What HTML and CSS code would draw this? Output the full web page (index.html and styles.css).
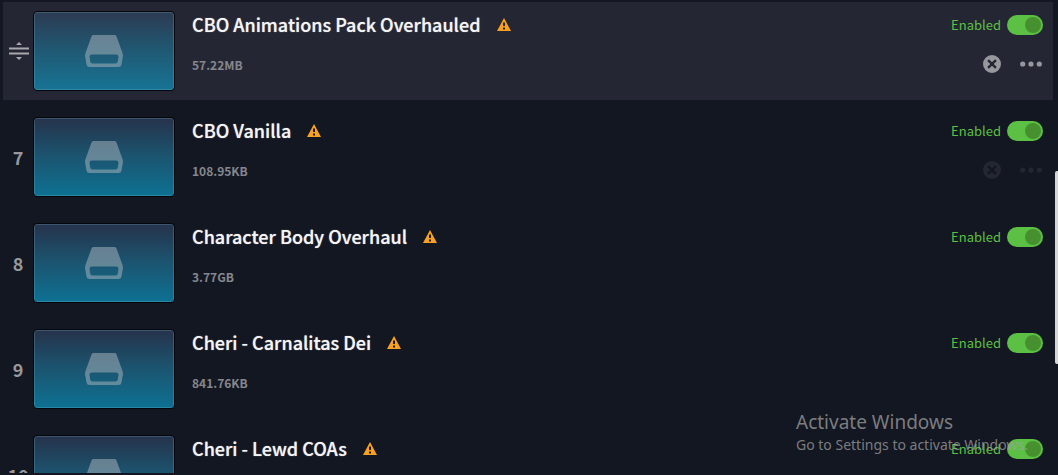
FILE: index.html
```
<!DOCTYPE html>
<html lang="en">
<head>
<meta charset="utf-8">
<title>Mods</title>
<link rel="stylesheet" href="styles.css">
</head>
<body>
<svg class="symbols" aria-hidden="true">
  <symbol id="drive" viewBox="0 0 38 32"><path fill-rule="evenodd" d="M8.500 0h21q1.400 0 2 1.400L37.500 18q.5 1.300.5 3l-1.500 8.500Q36 32 33.500 32h-29Q2 32 1.500 29.500L0 21q0-1.700.5-3L6.500 1.400Q7.100 0 8.500 0zM7 19.500q-2.500 0-2.500 2l.7 5Q5.500 28.500 7.500 28.500h23q2 0 2.300-2l.7-5q0-2-2.500-2z"/></symbol>
  <symbol id="warning" viewBox="0 0 14 13"><path fill-rule="evenodd" d="M7 0l7 13H0zM6 4.500v3.500h2V4.500zM6 9.500v2h2v-2z"/></symbol>
  <symbol id="remove" viewBox="0 0 18 18"><path fill-rule="evenodd" d="M9 0a9 9 0 1 1 0 18A9 9 0 0 1 9 0zM5.900 4.200L4.200 5.900 7.300 9l-3.100 3.100 1.700 1.700L9 10.700l3.100 3.100 1.700-1.700L10.700 9l3.100-3.100-1.700-1.700L9 7.300z"/></symbol>
  <symbol id="more" viewBox="0 0 23 6"><circle cx="2.700" cy="3" r="2.600"/><circle cx="11" cy="3" r="2.600"/><circle cx="19.300" cy="3" r="2.600"/></symbol>
</svg>

<main class="viewport">
  <ol class="mods">
    <li class="mod mod-active">
      <span class="order"><svg class="grip" viewBox="0 0 22 20" role="img" aria-label="Drag to reorder"><path d="M12 1l3 3H9zM2 6.500h20v2H2zM2 11.500h20v2H2zM9 16h6l-3 3z"/></svg></span>
      <div class="thumb"><svg class="drive"><use href="#drive"/></svg></div>
      <div class="info">
        <h2 class="title">CBO Animations Pack Overhauled <svg class="warning"><use href="#warning"/></svg></h2>
        <p class="size">57.22MB</p>
      </div>
      <div class="controls">
        <label class="toggle">Enabled <input class="switch" type="checkbox" role="switch" checked></label>
        <div class="actions">
          <button class="action" aria-label="Remove"><svg class="remove"><use href="#remove"/></svg></button>
          <button class="action" aria-label="More"><svg class="more"><use href="#more"/></svg></button>
        </div>
      </div>
    </li>
    <li class="mod">
      <span class="order">7</span>
      <div class="thumb"><svg class="drive"><use href="#drive"/></svg></div>
      <div class="info">
        <h2 class="title">CBO Vanilla <svg class="warning"><use href="#warning"/></svg></h2>
        <p class="size">108.95KB</p>
      </div>
      <div class="controls">
        <label class="toggle">Enabled <input class="switch" type="checkbox" role="switch" checked></label>
        <div class="actions actions-faded">
          <button class="action" aria-label="Remove"><svg class="remove"><use href="#remove"/></svg></button>
          <button class="action" aria-label="More"><svg class="more"><use href="#more"/></svg></button>
        </div>
      </div>
    </li>
    <li class="mod">
      <span class="order">8</span>
      <div class="thumb"><svg class="drive"><use href="#drive"/></svg></div>
      <div class="info">
        <h2 class="title">Character Body Overhaul <svg class="warning"><use href="#warning"/></svg></h2>
        <p class="size">3.77GB</p>
      </div>
      <div class="controls">
        <label class="toggle">Enabled <input class="switch" type="checkbox" role="switch" checked></label>
      </div>
    </li>
    <li class="mod">
      <span class="order">9</span>
      <div class="thumb"><svg class="drive"><use href="#drive"/></svg></div>
      <div class="info">
        <h2 class="title">Cheri - Carnalitas Dei <svg class="warning"><use href="#warning"/></svg></h2>
        <p class="size">841.76KB</p>
      </div>
      <div class="controls">
        <label class="toggle">Enabled <input class="switch" type="checkbox" role="switch" checked></label>
      </div>
    </li>
    <li class="mod">
      <span class="order">10</span>
      <div class="thumb"><svg class="drive"><use href="#drive"/></svg></div>
      <div class="info">
        <h2 class="title">Cheri - Lewd COAs <svg class="warning"><use href="#warning"/></svg></h2>
      </div>
      <div class="controls">
        <label class="toggle">Enabled <input class="switch" type="checkbox" role="switch" checked></label>
      </div>
    </li>
  </ol>
</main>
<div class="scroll-thumb"></div>
<aside class="watermark">
  <p class="watermark-title">Activate Windows</p>
  <p class="watermark-text">Go to Settings to activate Windows.</p>
</aside>
</body>
</html>
```
FILE: styles.css
```
* { box-sizing: border-box; }

body {
  margin: 0;
  height: 100vh;
  overflow: hidden;
  position: relative;
  background: #131722;
  color: #f4f4f5;
  font-family: "Noto Sans CJK SC", "Noto Sans", sans-serif;
}

h2, p, ol { margin: 0; padding: 0; }
svg { display: block; fill: currentColor; }
.symbols { position: absolute; width: 0; height: 0; }

.viewport {
  height: calc(100vh - 2px);
  overflow: hidden;
  padding: 2px 5px 0 3px;
}

.mods {
  list-style: none;
  display: flex;
  flex-direction: column;
  gap: 8px;
}

.mod {
  display: flex;
  align-items: flex-start;
  padding: 9px 10px 9px 0;
}
.mod-active { background: #242733; }

.order {
  width: 30px;
  flex: none;
  align-self: center;
  display: flex;
  justify-content: center;
  color: #97989d;
  font-size: 18px;
  line-height: 24px;
  font-weight: 700;
}
.grip { width: 22px; height: 20px; color: #a7a8ad; }

.thumb {
  width: 142px;
  height: 80px;
  flex: none;
  display: flex;
  align-items: center;
  justify-content: center;
  border: 1px solid #03060a;
  border-radius: 4px;
  background: linear-gradient(#26334b, #1b5570 50%, #0d7193);
  box-shadow: inset 0 0 0 1px rgba(130, 190, 210, 0.25);
  color: rgba(168, 180, 187, 0.52);
}
.mod-active .thumb { background: linear-gradient(#2c3b52, #205973 50%, #167495); }
.drive { width: 38px; height: 32px; }

.info { flex: 1; min-width: 0; padding-left: 17px; }

.title {
  display: flex;
  align-items: center;
  gap: 16px;
  font-size: 18px;
  line-height: 26px;
  font-weight: 500;
  text-shadow: 0 0 1px rgba(244, 244, 245, 0.7);
  white-space: nowrap;
}
.warning { width: 14px; height: 13px; color: #f9a11f; }

.size {
  margin-top: 18px;
  color: #85878e;
  font-size: 12px;
  line-height: 20px;
  font-weight: 700;
}

.controls {
  display: flex;
  flex-direction: column;
  align-items: flex-end;
  gap: 20px;
  padding-top: 4px;
}

.toggle {
  display: flex;
  align-items: center;
  gap: 6px;
  color: #5bc043;
  font-size: 13px;
  line-height: 20px;
}

.switch {
  appearance: none;
  width: 36px;
  height: 20px;
  margin: 0;
  padding: 2px;
  display: flex;
  border-radius: 10px;
  background: #6c6e76;
}
.switch:checked { background: #5bc043; justify-content: flex-end; }
.switch::before {
  content: "";
  width: 16px;
  height: 16px;
  border-radius: 50%;
  background: #46902f;
}

.actions { display: flex; align-items: center; gap: 19px; color: #97989e; }
.actions-faded { color: #242732; }
.action {
  padding: 0;
  border: 0;
  background: none;
  color: inherit;
}
.remove { width: 18px; height: 18px; }
.more { width: 23px; height: 6px; }

.scroll-thumb {
  position: absolute;
  top: 36%;
  right: 0;
  width: 3px;
  height: 193px;
  border-radius: 2px 0 0 2px;
  background: #d6d6d6;
}

.watermark {
  position: absolute;
  right: 26px;
  bottom: 20px;
  width: 236px;
  color: rgba(160, 160, 160, 0.75);
  font-family: "Noto Sans", "Open Sans", sans-serif;
  white-space: nowrap;
  pointer-events: none;
}
.watermark-title { font-size: 19px; line-height: 26px; }
.watermark-text { font-size: 14px; line-height: 20px; }
```
